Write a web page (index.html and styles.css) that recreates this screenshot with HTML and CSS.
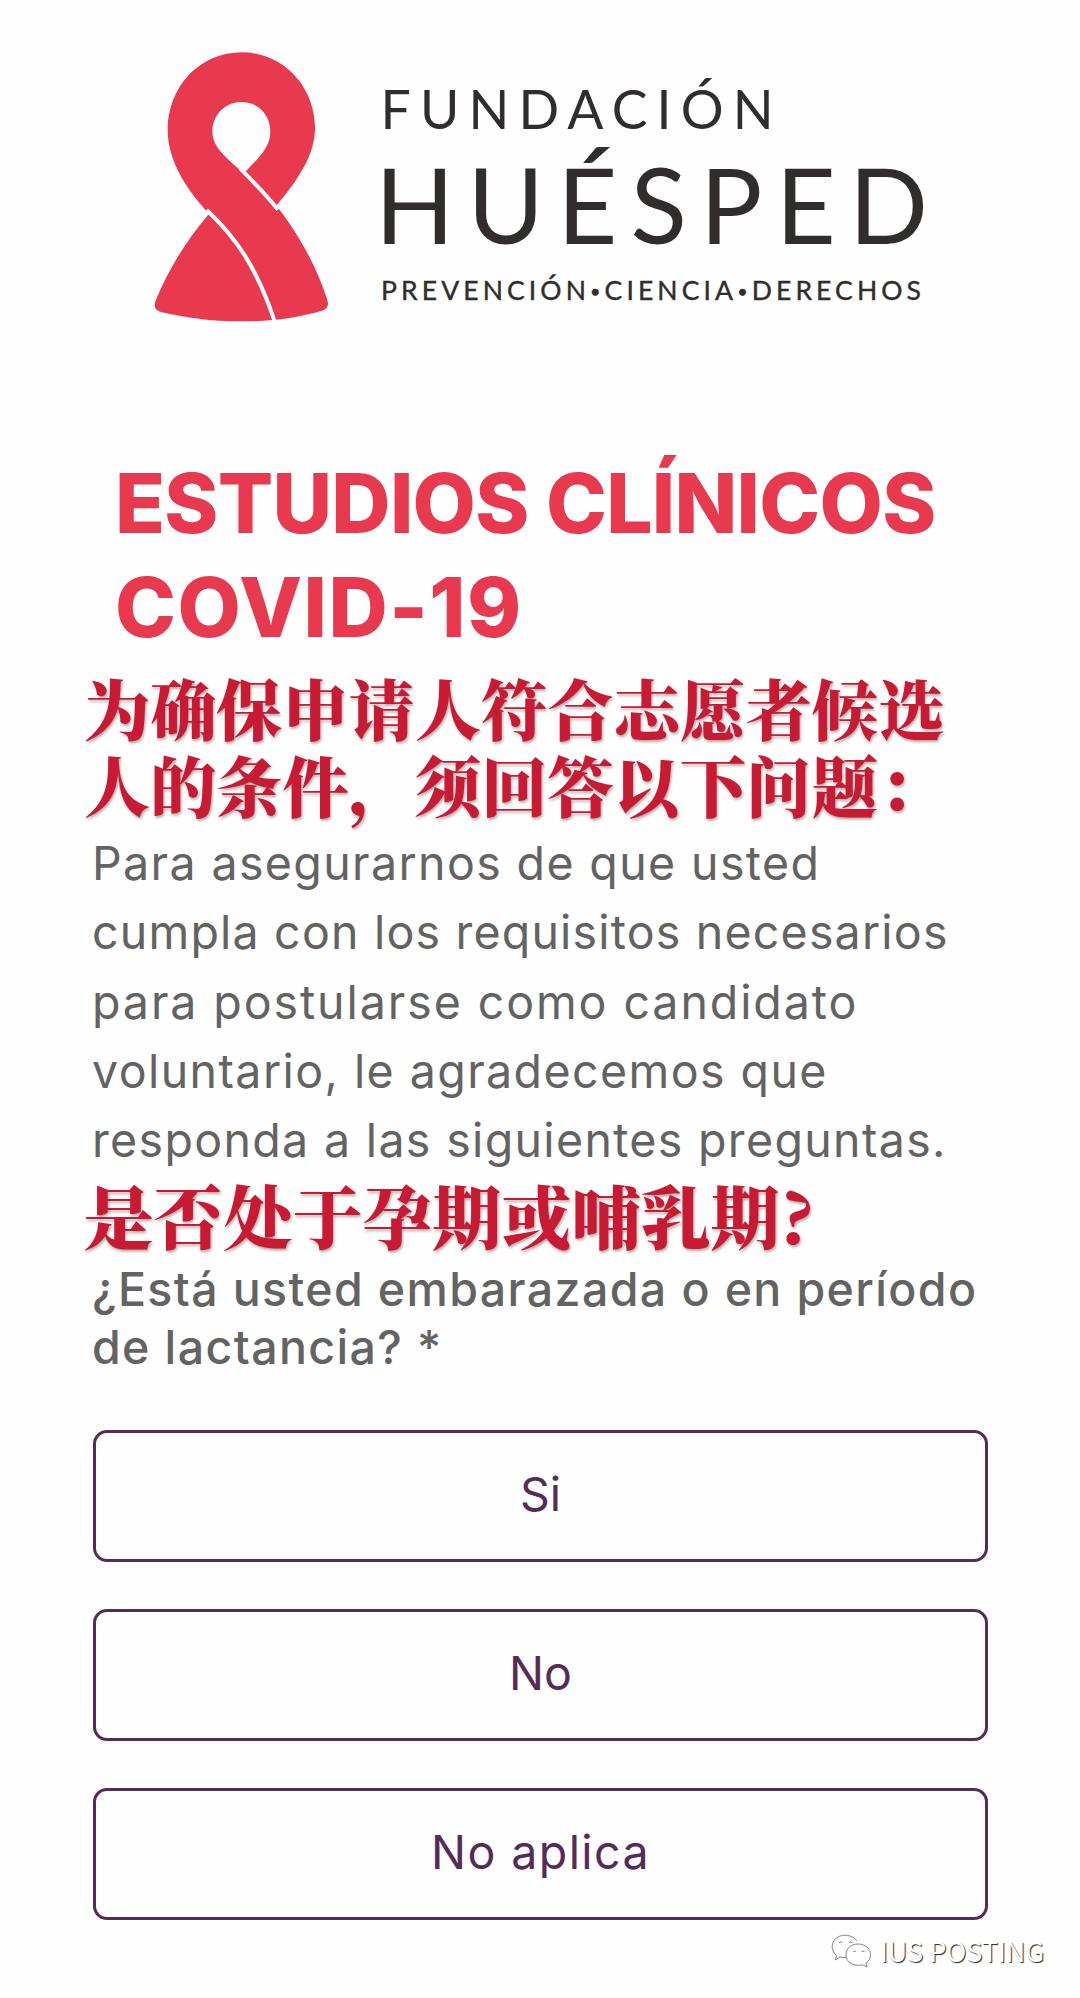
FILE: index.html
```html
<!DOCTYPE html>
<html lang="es">
<head>
  <title>Estudios Clínicos COVID-19</title>
  <meta charset="UTF-8">
  <meta name="viewport" content="width=device-width, initial-scale=1">
  <link rel="stylesheet" href="styles.css">
</head>
<body>
  <header class="header">
    <svg class="logo" viewBox="140 40 800 300" role="img" aria-label="Fundación Huésped">
      <!-- ribbon -->
      <g transform="translate(140 40) scale(.33333)">
        <path class="ribbon" fill-rule="evenodd" d="M305 37C430 37 525 140 525 265C525 345 474 420 409 497C468 570 530 677 562 780Q570 804 546 812C470 833 400 844 305 844C210 844 140 833 60 815Q37 808 47 782C84 690 140 600 207 521C150 460 83 370 83 270C83 140 180 37 305 37ZM305 186C355 186 391 225 391 275C391 325 350 358 312 400C270 362 217 325 217 275C217 225 255 186 305 186Z"/>
        <path class="ribbon-gap" d="M300 385C340 425 375 460 414 509"/>
        <path class="ribbon-gap" d="M200 510C290 595 352 685 406 850"/>
      </g>
      <text class="logo-top" x="380.500" y="129" textLength="393">FUNDACIÓN</text>
      <text class="logo-name" x="375" y="243.500" textLength="553">HUÉSPED</text>
      <text class="logo-sub" x="381" y="300" textLength="540">PREVENCIÓN<tspan class="dot" dy="-2.500">•</tspan><tspan dy="2.500">CIENCIA</tspan><tspan class="dot" dy="-2.500">•</tspan><tspan dy="2.500">DERECHOS</tspan></text>
    </svg>
  </header>
  <main class="content">
    <h1 class="title">
      <span class="line title-1">ESTUDIOS CLÍNICOS</span>
      <span class="line title-2">COVID-19</span>
    </h1>
    <p class="note" lang="zh">
      <span class="line">为确保申请人符合志愿者候选</span>
      <span class="line">人的条件，须回答以下问题：</span>
    </p>
    <p class="intro">
      <span class="line intro-1">Para asegurarnos de que usted</span>
      <span class="line intro-2">cumpla con los requisitos necesarios</span>
      <span class="line intro-3">para postularse como candidato</span>
      <span class="line intro-4">voluntario, le agradecemos que</span>
      <span class="line intro-5">responda a las siguientes preguntas.</span>
    </p>
    <p class="note note-question" lang="zh">是否处于孕期或哺乳期?</p>
    <h2 class="question">
      <span class="line">¿Está usted embarazada o en período</span>
      <span class="line">de lactancia? *</span>
    </h2>
    <div class="options">
      <button class="option" type="button">Si</button>
      <button class="option" type="button">No</button>
      <button class="option option-wide" type="button">No aplica</button>
    </div>
  </main>
  <footer class="watermark">
    <svg class="wechat" viewBox="0 0 42 34">
      <path d="M15 23.5Q11 24 9 23L4.500 26L5.500 21.500C-1 16 0 7 7 3C12 0 21 .5 26 7"/>
      <path d="M15 21C15 14.500 20 10 27 10S39.500 14.500 39.500 20.500C39.500 24 38 27 35 29L36 33L31.500 30.800C22 33 15 28 15 21Z"/>
      <path d="M8 9a2 2 0 0 1 3.500 0M18 9a2 2 0 0 1 3.500 0M22 18a1.700 1.700 0 0 1 3 0M30.500 18a1.700 1.700 0 0 1 3 0"/>
    </svg>
    <span class="watermark-text">IUS POSTING</span>
  </footer>
</body>
</html>
```
FILE: styles.css
```css
:root {
  --red: #e8394f;
  --note-red: #c81a33;
  --purple: #562b59;
  --gray: #636363;
  --ink: #302d2c;
}
* {
  box-sizing: border-box;
}
body {
  margin: 0;
  background-color: #fefefe;
  color: var(--gray);
  font-family: Inter, sans-serif;
  font-size: 46.5px;
}
.header {
  padding: 40px 140px 0;
}
.logo {
  display: block;
  width: 800px;
  height: 300px;
}
.ribbon {
  fill: var(--red);
}
.ribbon-gap {
  fill: none;
  stroke: #fefefe;
  stroke-width: 12;
}
.logo text {
  fill: var(--ink);
  font-family: Lato, sans-serif;
}
.logo-top {
  font-size: 53.5px;
}
.logo-name {
  font-size: 104px;
}
.logo-sub {
  font-size: 26.5px;
  stroke: var(--ink);
  stroke-width: 0.4px;
}
.dot {
  font-size: 18px;
}
.content {
  padding: 0 92px 0 90px;
}
.line {
  display: block;
  white-space: nowrap;
}
.title {
  margin: 112px 0 0 25px;
  color: var(--red);
  font-size: 82px;
  font-weight: 800;
  line-height: 103.5px;
}
.title-1 {
  letter-spacing: -0.72px;
}
.title-2 {
  letter-spacing: 1.5px;
}
.note {
  margin: 9px 0 0 -6px;
  color: var(--note-red);
  font-family: "Noto Serif CJK SC", "Noto Sans CJK SC", serif;
  font-size: 66.2px;
  font-weight: 900;
  line-height: 77px;
  white-space: nowrap;
  text-shadow: 1px 2px 3px rgba(90, 60, 60, 0.45);
}
.intro {
  margin: 7px 0 0 2px;
  line-height: 69.25px;
}
.intro-1 { letter-spacing: 1.38px; }
.intro-2 { letter-spacing: 1.2px; }
.intro-3 { letter-spacing: 1.92px; }
.intro-4 { letter-spacing: 1.43px; }
.intro-5 { letter-spacing: 1.34px; }
.note-question {
  margin-top: 1px;
  font-size: 69.6px;
  line-height: 76px;
}
.question {
  margin: 9px 0 0 2px;
  font-size: 46.5px;
  font-weight: 500;
  line-height: 57.5px;
  letter-spacing: 1.38px;
}
.options {
  display: grid;
  gap: 46.7px;
  margin: 54px 0 0 3px;
}
.option {
  height: 132px;
  padding: 0 0 4px;
  border: 3px solid var(--purple);
  border-radius: 14px;
  background: transparent;
  color: var(--purple);
  font: inherit;
}
.option-wide {
  letter-spacing: 1.4px;
}
.watermark {
  display: flex;
  align-items: center;
  justify-content: flex-end;
  gap: 7px;
  margin-top: 12px;
  padding-right: 36px;
}
.wechat {
  width: 42px;
  height: 34px;
  fill: #fff;
  stroke: #777;
  stroke-width: 0.9;
}
.watermark-text {
  color: #fff;
  font-family: "Noto Sans CJK SC", sans-serif;
  font-size: 27px;
  line-height: 38px;
  text-shadow: 1px 1px 1px #222;
}
```
